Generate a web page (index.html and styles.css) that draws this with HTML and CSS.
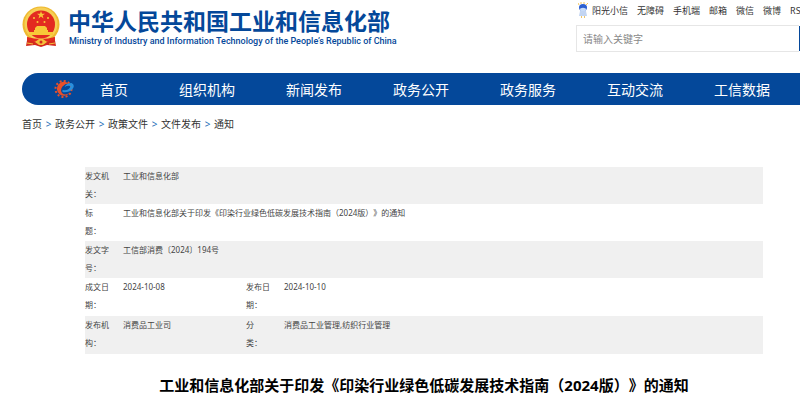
FILE: index.html
```html
<!DOCTYPE html>
<html lang="zh-CN">

<head>
    <meta charset="UTF-8" />
    <meta name="viewport" content="width=device-width, initial-scale=1.0" />
    <title>中华人民共和国工业和信息化部</title>
    <link rel="stylesheet" href="styles.css">
</head>

<body>
    <div class="page">

        <header class="header">
            <a class="brand" href="#">
                <svg class="emblem" viewBox="0 0 38 42" aria-hidden="true">
                    <path d="M6 29L4 40l9-1 6 2 6-2 9 1-2-11z" fill="#d42a1e" />
                    <ellipse cx="19" cy="18.500" rx="18.500" ry="18" fill="#efb92f" />
                    <circle cx="19" cy="18" r="16.500" fill="#f6cf55" />
                    <circle cx="19" cy="18.500" r="14" fill="#e32a20" />
                    <path d="M19 5l1 2.800h3l-2.400 1.700.9 2.900-2.500-1.800-2.500 1.800.9-2.900L15 7.800h3z" fill="#f8c838" />
                    <g fill="#f8c838">
                        <circle cx="12" cy="12" r="1" />
                        <circle cx="15.500" cy="16" r="1" />
                        <circle cx="22.500" cy="16" r="1" />
                        <circle cx="26" cy="12" r="1" />
                        <path d="M13 22l2-2h8l2 2v2H13z" />
                        <path d="M12 24h14v2H12zM7 26h24v3H7z" />
                    </g>
                    <path d="M5 31q14 4 28 0v3q-14 4-28 0z" fill="#e32a20" />
                    <path d="M13 36l4-3h4l4 3-4 3h-4z" fill="#f4c13b" />
                    <path d="M5 37l6 1M27 38l6-1" stroke="#f4c13b" stroke-width="1" />
                    <circle cx="19" cy="36" r="1.500" fill="#d42a1e" />
                </svg>
                <span class="brand-text">
                    <span class="brand-name">中华人民共和国工业和信息化部</span>
                    <span class="brand-en">Ministry of Industry and Information Technology of the People’s Republic of China</span>
                </span>
            </a>

            <div class="tools">
                <div class="quick-links">
                    <a class="mascot-link" href="#">
                        <svg class="mascot" viewBox="0 0 10 17" aria-hidden="true">
                            <path d="M1 3L0 1M3 2V0M6 2V0M8 3l2-2" stroke="#f4c65a" stroke-width="1" />
                            <ellipse cx="5" cy="5.500" rx="4" ry="3.500" fill="#2d5fd0" />
                            <ellipse cx="5" cy="7.500" rx="3" ry="1.800" fill="#c9dcf8" />
                            <path d="M2 9h6l1 5H1z" fill="#c3d5f2" />
                            <path d="M3 14h1v2H3zM6 14h1v2H6z" fill="#eec56a" />
                        </svg>阳光小信</a>
                    <a href="#">无障碍</a>
                    <a href="#">手机端</a>
                    <a href="#">邮箱</a>
                    <a href="#">微信</a>
                    <a href="#">微博</a>
                    <a href="#">RSS</a>
                </div>
                <form class="search">
                    <input type="text" class="search-field" placeholder="请输入关键字" aria-label="请输入关键字" />
                    <button type="button" class="search-btn" aria-label="搜索"></button>
                </form>
            </div>
        </header>

        <nav class="nav">
            <svg class="nav-logo" viewBox="0 0 20 20" aria-hidden="true">
                <circle cx="9" cy="10" r="8" fill="none" stroke="#e8502a" stroke-width="2" stroke-dasharray="2 2.190" />
                <path d="M14 4.500A7 7 0 1 0 15 14q-4 2.500-7 .5-3-3 0-7 2.500-3 6-3z" fill="#e8502a" />
                <path d="M8 11q7 1 8-4-3-1-6 1 2-4 7-4 4 2 1 6-4 4-10 3z" fill="#2a8fdc" />
            </svg>
            <a href="#">首页</a>
            <a href="#">组织机构</a>
            <a href="#">新闻发布</a>
            <a href="#">政务公开</a>
            <a href="#">政务服务</a>
            <a href="#">互动交流</a>
            <a href="#">工信数据</a>
        </nav>

        <div class="breadcrumb">
            <a href="#">首页</a><span class="sep">&gt;</span>
            <a href="#">政务公开</a><span class="sep">&gt;</span>
            <a href="#">政策文件</a><span class="sep">&gt;</span>
            <a href="#">文件发布</a><span class="sep">&gt;</span>
            <a href="#">通知</a>
        </div>

        <main class="article">
            <!-- 文件信息 -->
            <table class="info">
                <colgroup>
                    <col class="col-label">
                    <col class="col-value">
                    <col class="col-label">
                    <col>
                </colgroup>
                <tr>
                    <th scope="row">发文机关：</th>
                    <td colspan="3">工业和信息化部</td>
                </tr>
                <tr>
                    <th scope="row">标<br>题：</th>
                    <td colspan="3">工业和信息化部关于印发《印染行业绿色低碳发展技术指南（2024版）》的通知</td>
                </tr>
                <tr>
                    <th scope="row">发文字号：</th>
                    <td colspan="3">工信部消费〔2024〕194号</td>
                </tr>
                <tr class="tall">
                    <th scope="row">成文日期：</th>
                    <td>2024-10-08</td>
                    <th scope="row">发布日期：</th>
                    <td>2024-10-10</td>
                </tr>
                <tr class="tall">
                    <th scope="row">发布机构：</th>
                    <td>消费品工业司</td>
                    <th scope="row">分<br>类：</th>
                    <td>消费品工业管理,纺织行业管理</td>
                </tr>
            </table>
            <!--// 文件信息 -->

            <h1 class="title">工业和信息化部关于印发《印染行业绿色低碳发展技术指南（2024版）》的通知</h1>
        </main>

    </div>
</body>

</html>
```
FILE: styles.css
```css
* {
    box-sizing: border-box;
}

body {
    margin: 0;
    overflow: hidden;
    background: #fff;
    color: #333;
    font-family: "Noto Sans", "Noto Sans CJK SC", sans-serif;
    font-size: 10px;
    text-spacing-trim: space-all;
}

a {
    color: inherit;
    text-decoration: none;
    white-space: nowrap;
}

.page {
    margin: 0 -26px 0 22px;
}

.header {
    display: flex;
    justify-content: space-between;
    align-items: flex-start;
    height: 73px;
}

.brand {
    display: flex;
    gap: 8px;
    padding-top: 6px;
    color: #04489a;
}

.emblem {
    width: 38px;
    height: 42px;
}

.brand-text {
    display: flex;
    flex-direction: column;
}

.brand-name {
    font-family: "Noto Sans CJK SC", sans-serif;
    font-size: 23px;
    font-weight: 700;
    line-height: 28px;
}

.brand-en {
    padding-left: 1px;
    font-family: Roboto, sans-serif;
    font-size: 9px;
    font-weight: 500;
    line-height: 14px;
}

.tools {
    width: 250px;
}

.quick-links {
    display: flex;
    align-items: center;
    gap: 9px;
    height: 20px;
    margin-bottom: 5px;
    padding-left: 2px;
    font-size: 9px;
}

.mascot-link {
    display: flex;
    align-items: center;
    gap: 4px;
}

.mascot {
    width: 10px;
    height: 17px;
}

.search {
    display: flex;
    align-items: center;
}

.search-field {
    width: 223px;
    height: 27px;
    padding: 0 6px;
    border: 1px solid #e6e6e6;
    border-right: none;
    outline: none;
    font: inherit;
}

.search-field::placeholder {
    color: #888;
}

.search-btn {
    flex: 1;
    height: 25px;
    padding: 0;
    border: none;
    background: #04489a;
}

.nav {
    display: flex;
    align-items: center;
    gap: 51px;
    height: 32px;
    padding-left: 32px;
    border-radius: 16px;
    background: #04489a;
    color: #fff;
    font-size: 14px;
}

.nav-logo {
    flex: none;
    width: 21px;
    height: 20px;
    margin-right: -26px;
}

.breadcrumb {
    display: flex;
    height: 38px;
    line-height: 38px;
}

.sep {
    width: 13px;
    color: #1f6fb8;
    text-align: center;
}

.article {
    padding: 24px 63px 0;
}

.info {
    width: 100%;
    border-collapse: collapse;
    table-layout: fixed;
    color: #444;
    font-size: 8px;
    line-height: 18px;
}

.info tr {
    height: 37px;
}

.info .tall {
    height: 38px;
}

.info tr:nth-child(odd) {
    background: #f0f0f0;
}

.info th,
.info td {
    padding: 0;
    font-weight: 400;
    text-align: left;
    vertical-align: top;
}

.info th {
    padding-right: 12px;
}

.col-label {
    width: 38px;
}

.col-value {
    width: 123px;
}

.title {
    margin: 20px 0 0;
    color: #000;
    font-size: 15px;
    font-weight: 700;
    line-height: 22px;
    text-align: center;
}
```
